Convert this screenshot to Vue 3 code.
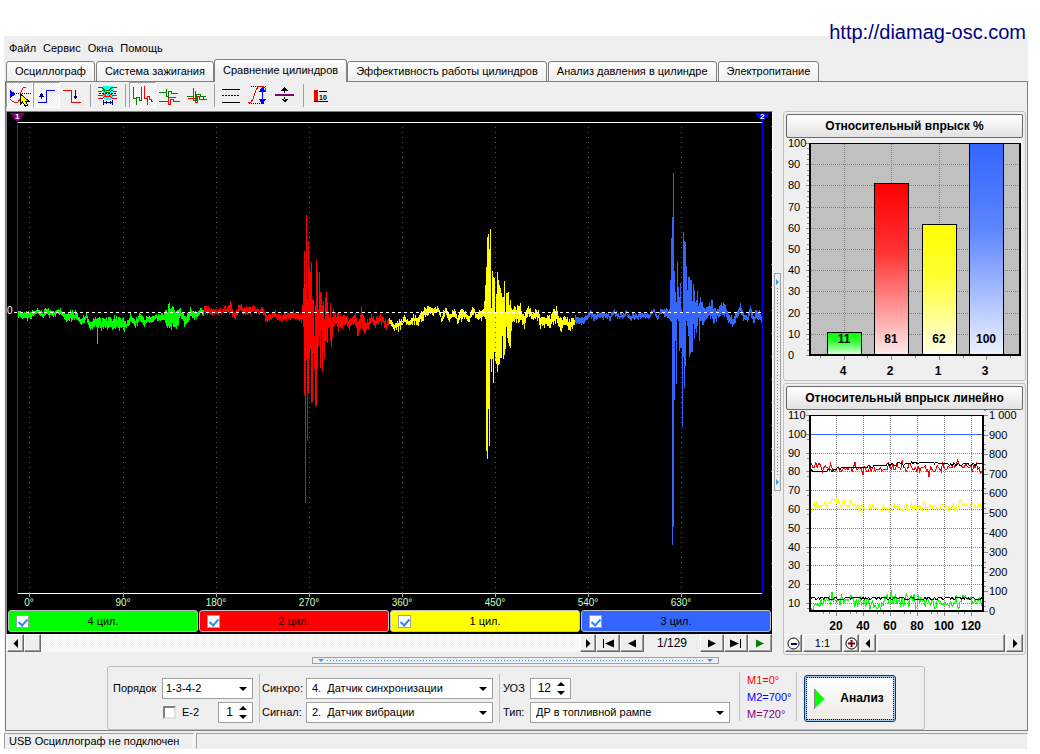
<script setup>
import { ref } from 'vue'

const menu = ['Файл', 'Сервис', 'Окна', 'Помощь']
const tabs = [
  'Осциллограф',
  'Система зажигания',
  'Сравнение цилиндров',
  'Эффективность работы цилиндров',
  'Анализ давления в цилиндре',
  'Электропитание',
]
const activeTab = ref(2)

const cylinders = ref([
  { name: '4 цил.', tone: 'green', on: true },
  { name: '2 цил.', tone: 'red', on: true },
  { name: '1 цил.', tone: 'yellow', on: true },
  { name: '3 цил.', tone: 'blue', on: true },
])

const order = ref('1-3-4-2')
const e2 = ref(false)
const e2Count = ref('1')
const sync = ref('sync')
const signal = ref('vibro')
const advance = ref('12')
const sensor = ref('rail')

/* Deterministic noise source */
function makeRandom(seed) {
  let s = seed
  return () => {
    s = (s * 1664525 + 1013904223) % 4294967296
    return s / 4294967296
  }
}

/* Quiet parts of the trace: [x, centre, half height] */
const quiet = {
  green: [[17, 315, 3], [30, 315, 3], [36, 311, 2], [42, 314, 3], [47, 311, 3], [51, 314, 2], [60, 311, 2], [65, 317, 3], [71, 316, 4], [76, 314, 3], [80, 322, 3], [86, 316, 3], [90, 326, 3], [95, 321, 4], [99, 324, 5], [105, 322, 4], [115, 322, 5], [122, 323, 6], [126, 325, 3], [130, 318, 3], [135, 324, 3], [139, 316, 3], [144, 322, 3], [148, 318, 3], [155, 318, 2], [160, 317, 3], [165, 317, 6], [170, 316, 11], [175, 318, 10], [180, 313, 4], [185, 321, 4], [190, 313, 4], [195, 315, 3], [200, 312, 2], [203, 311, 2]],
  red: [[204, 309, 3], [210, 311, 3], [220, 311, 2], [227, 309, 3], [231, 307, 5], [234, 316, 3], [239, 307, 3], [245, 311, 3], [253, 308, 3], [258, 312, 2], [262, 308, 2], [266, 318, 3], [275, 314, 3], [278, 318, 3], [285, 315, 3], [292, 315, 3], [301, 316, 4], [334, 318, 7], [340, 323, 8], [346, 320, 4], [350, 324, 4], [355, 318, 6], [358, 328, 8], [361, 318, 9], [365, 328, 5], [370, 319, 4], [375, 322, 4], [380, 318, 3], [386, 325, 3], [388, 323, 3]],
  yellow: [[389, 322, 3], [394, 326, 3], [400, 324, 4], [404, 319, 3], [409, 324, 2], [413, 318, 3], [417, 321, 4], [422, 315, 4], [428, 309, 4], [433, 312, 3], [438, 308, 2], [441, 318, 3], [445, 310, 3], [449, 319, 3], [454, 312, 3], [457, 319, 3], [461, 313, 5], [465, 314, 3], [468, 319, 3], [473, 310, 3], [477, 316, 3], [483, 314, 4], [513, 314, 6], [520, 313, 8], [524, 321, 5], [528, 309, 4], [532, 317, 3], [536, 312, 4], [540, 320, 6], [550, 321, 5], [556, 314, 8], [560, 325, 8], [564, 320, 5], [570, 324, 4], [574, 321, 4]],
  blue: [[575, 319, 3], [580, 321, 3], [586, 318, 2], [590, 313, 3], [594, 318, 3], [600, 314, 2], [605, 315, 3], [610, 317, 2], [613, 311, 2], [618, 316, 2], [626, 313, 2], [630, 317, 2], [642, 315, 2], [650, 315, 2], [653, 310, 2], [657, 317, 2], [661, 310, 2], [669, 314, 5], [702, 313, 9], [708, 312, 6], [712, 311, 9], [716, 315, 6], [720, 310, 5], [724, 309, 6], [728, 318, 4], [733, 321, 4], [737, 315, 3], [740, 308, 3], [743, 315, 3], [747, 319, 2], [750, 311, 4], [753, 319, 4], [757, 314, 4], [762, 318, 4]],
}
/* Injector bursts, one [top, bottom] pair per column */
const bursts = {
  red: { from: 302, rows: [[305, 318], [288, 326], [251, 394], [284, 502], [215, 359], [299, 440], [241, 392], [267, 358], [272, 348], [262, 402], [299, 401], [300, 352], [336, 369], [305, 406], [260, 404], [271, 368], [309, 345], [272, 335], [292, 367], [294, 330], [305, 371], [301, 351], [319, 358], [297, 340], [292, 341], [302, 342], [314, 327], [318, 326], [303, 340], [321, 346], [317, 337]] },
  yellow: { from: 484, rows: [[301, 316], [285, 318], [267, 450], [237, 458], [234, 408], [249, 445], [229, 358], [308, 371], [271, 358], [277, 382], [278, 351], [312, 360], [294, 363], [272, 371], [280, 364], [285, 363], [288, 357], [293, 357], [297, 335], [297, 358], [281, 354], [312, 348], [293, 326], [293, 337], [292, 342], [305, 345], [300, 347], [308, 330]] },
  blue: { from: 670, rows: [[280, 320], [238, 321], [217, 544], [173, 526], [271, 399], [292, 340], [302, 383], [261, 318], [287, 320], [297, 350], [283, 347], [309, 347], [313, 426], [232, 356], [241, 387], [242, 365], [266, 320], [290, 325], [277, 335], [277, 356], [280, 353], [280, 351], [301, 351], [284, 323], [290, 338], [302, 328], [300, 332], [291, 325], [306, 317], [303, 340], [297, 320], [302, 320]] },
}

function tracePath(name, seed) {
  const rnd = makeRandom(seed)
  const keys = quiet[name]
  const burst = bursts[name]
  let d = ''
  let k = 0
  for (let x = keys[0][0]; x <= keys[keys.length - 1][0]; x++) {
    while (k < keys.length - 2 && x > keys[k + 1][0]) k++
    const a = keys[k]
    const b = keys[k + 1]
    const t = Math.min(1, (x - a[0]) / (b[0] - a[0]))
    const mid = a[1] + (b[1] - a[1]) * t + (rnd() - 0.5) * 3
    const half = a[2] + (b[2] - a[2]) * t
    let top = Math.round(mid - half * (0.4 + rnd() * 0.9))
    let bottom = Math.round(mid + half * (0.4 + rnd() * 0.9))
    if (burst && x >= burst.from && x < burst.from + burst.rows.length) {
      ;[top, bottom] = burst.rows[x - burst.from]
    }
    if (name === 'green' && x === 97) bottom = 343
    d += `M${x} ${top}h1V${bottom + 1}h-1z`
  }
  return d
}
const traces = [
  { tone: 'green', d: tracePath('green', 11) },
  { tone: 'red', d: tracePath('red', 23) },
  { tone: 'yellow', d: tracePath('yellow', 37) },
  { tone: 'blue', d: tracePath('blue', 51) },
]

const scope = { x: 7, y: 112, w: 765, h: 497 }
const grid = [0, 90, 180, 270, 360, 450, 540, 630].map((deg, i) => ({
  label: deg + '°',
  x: [29, 123, 216, 309, 402, 495, 588, 681][i],
}))
const left = (x) => ({ left: ((x - scope.x) / scope.w) * 100 + '%' })
const edgeTicks = Array.from({ length: 21 }, (_, i) => 126 + i * 23)

/* Bar chart */
const barY = (v) => Math.round(355 - v * 2.12)
const bars = [
  { name: '4', value: 11, x: 827, tone: 'green' },
  { name: '2', value: 81, x: 874, tone: 'red' },
  { name: '1', value: 62, x: 922, tone: 'yellow' },
  { name: '3', value: 100, x: 969, tone: 'blue' },
]
const barScale = Array.from({ length: 11 }, (_, i) => i * 10)
const barMinor = Array.from({ length: 41 }, (_, i) => Math.round(355 - i * 5.3))

/* Line chart */
const lineY = (v) => 415 + (110 - v) * 1.88
const lineX = (n) => 809 + n * 1.35
const lineScale = Array.from({ length: 11 }, (_, i) => 110 - i * 10)
const rightScale = Array.from({ length: 11 }, (_, i) => ({
  label: i === 10 ? '1 000' : String(i * 100),
  y: Math.round(611 - i * 19.6),
}))
const lineTicks = [20, 40, 60, 80, 100, 120]

function series(seed, keys, amp, low) {
  const rnd = makeRandom(seed)
  const pts = []
  let k = 0
  for (let n = 1; n <= 129; n++) {
    while (k < keys.length - 2 && n > keys[k + 1][0]) k++
    const [x0, v0] = keys[k]
    const [x1, v1] = keys[k + 1]
    const base = v0 + ((v1 - v0) * (n - x0)) / (x1 - x0)
    const wide = rnd() > 0.85 ? 1.8 : 1
    const v = Math.max(low, Math.round(base + (rnd() - 0.5) * 2 * amp * wide))
    pts.push(`${lineX(n).toFixed(1)},${lineY(v).toFixed(1)}`)
  }
  return pts.join(' ')
}
const lines = [
  { tone: 'red', pts: series(5, [[1, 83], [8, 83], [20, 82], [40, 81], [60, 82], [65, 83], [90, 81], [110, 83], [129, 81]], 2.1, 70) },
  { tone: 'yellow', pts: series(9, [[1, 62], [8, 61], [20, 64], [28, 62], [50, 61], [100, 61], [129, 62]], 2, 50) },
  { tone: 'green', pts: series(14, [[1, 8], [12, 13], [20, 10], [28, 13], [45, 9], [60, 12], [100, 10], [129, 10]], 3.6, 6.4) },
  { tone: 'black', pts: series(3, [[1, 80], [12, 80], [25, 82], [40, 82], [60, 83.4], [85, 85], [110, 83.5], [129, 84]], 0.5, 70) },
  { tone: 'black', pts: series(8, [[1, 12.6], [129, 12.4]], 0.3, 12) },
]
</script>

<template>
  <div class="page">
    <a class="site" href="http://diamag-osc.com">http://diamag-osc.com</a>

    <div class="window">
      <nav class="menu">
        <button v-for="m in menu" :key="m" type="button">{{ m }}</button>
      </nav>

      <div class="tabs" role="tablist">
        <button
          v-for="(t, i) in tabs"
          :key="t"
          type="button"
          role="tab"
          class="tab"
          :class="{ active: i === activeTab }"
          :aria-selected="i === activeTab"
          @click="activeTab = i"
        >{{ t }}</button>
      </div>

      <main class="frame">
        <div class="toolbar">
          <button type="button" class="tool pressed" aria-label="Уровень">
            <svg viewBox="0 0 27 28">
              <path d="M4 8v8l6-4z" fill="#00f" />
              <path d="M10 11.500H25" stroke="#000" stroke-dasharray="1 1" fill="none" />
              <path d="M4 17l2 2 2 1h4l2-3 1-7 2-4 3-1" stroke="#f00" fill="none" />
              <path d="M14.500 12v10l2-2 3 4 2-1-2-4h3z" fill="#ff0" stroke="#000" />
            </svg>
          </button>
          <button type="button" class="tool pressed" aria-label="Фронт">
            <svg viewBox="0 0 27 28" fill="none">
              <path d="M5 20.500H13.500V8.500H22" stroke="#00f" />
              <path d="M8.500 17V11" stroke="#000080" />
              <path d="M6 14.500l2.500-4 2.500 4z" fill="#000080" />
            </svg>
          </button>
          <button type="button" class="tool" aria-label="Спад">
            <svg viewBox="0 0 27 28" fill="none">
              <path d="M3 8.500H11.500V20.500H21" stroke="#f00" />
              <path d="M15.500 8V15" stroke="#000080" />
              <path d="M13 13.500l2.500 4 2.500-4z" fill="#000080" />
            </svg>
          </button>
          <span class="sep"></span>
          <button type="button" class="tool" aria-label="Окно">
            <svg viewBox="0 0 27 28" fill="none">
              <path d="M9 4h10v11l-2 3h-6l-2-3z" fill="#0ff" />
              <path d="M4 5.500h4l3 3h4l3-3h5M4 9.500h3l2-1 3 2h3l3-2 2 1h3" stroke="#008000" />
              <path d="M5 11.500H23" stroke="#000" stroke-dasharray="2 1" />
              <path d="M4 13.500h4l2-1 3 2h1l3-2 2 1h4M4 16.500h4l3-2h5l3 2h4" stroke="#f00" />
              <path d="M9.500 18v5M18.500 18v5M10 20.500h8M12 19v3M16 19v3" stroke="#000080" />
            </svg>
          </button>
          <span class="sep"></span>
          <button type="button" class="tool pressed" aria-label="Последовательно">
            <svg viewBox="0 0 27 28" fill="none">
              <path d="M4.500 5V16.500H7.500V22.500V15.500H10.500V18.500H12.500V4.500V16.500" stroke="#008000" />
              <path d="M15.500 4V16.500H18.500V22.500V14.500H20.500V17.500H22.500V19.500H24" stroke="#f00" />
            </svg>
          </button>
          <button type="button" class="tool" aria-label="Раздельно">
            <svg viewBox="0 0 27 28" fill="none">
              <path d="M3 10.500H10.500V6.500V14.500H12.500V9.500H15.500V11.500H22" stroke="#008000" />
              <path d="M3 19.500H12.500V14.500V22.500H14.500V17.500H17.500V19.500H24M12 15.500h8" stroke="#f00" />
            </svg>
          </button>
          <button type="button" class="tool" aria-label="Наложение">
            <svg viewBox="0 0 27 28" fill="none">
              <path d="M4 14.500H10.500V5.500V18.500H13.500V12.500H17.500V14.500H23" stroke="#008000" />
              <path d="M5 16.500H12.500V8.500V20.500H14.500V14.500H16.500V17.500H24M20.500 14v4" stroke="#f00" />
            </svg>
          </button>
          <span class="sep"></span>
          <button type="button" class="tool" aria-label="Линии">
            <svg viewBox="0 0 27 28" fill="none" stroke="#000">
              <path d="M4 7.500H22M4 20.500H22" />
              <path d="M4 13.500H22" stroke-dasharray="2 1" />
            </svg>
          </button>
          <button type="button" class="tool" aria-label="Амплитуда">
            <svg viewBox="0 0 27 28" fill="none">
              <path d="M6 4.500H22M4 21.500H20" stroke="#000" stroke-dasharray="1 1" />
              <path d="M3 21l3-1 2-3 3-9 2-3 4-1 3 2 1 3" stroke="#f00" />
              <path d="M17.500 7V20" stroke="#00f" />
              <path d="M13.500 10l4-5 4 5zM13.500 17l4 5 4-5z" fill="#00f" />
            </svg>
          </button>
          <button type="button" class="tool" aria-label="Центр">
            <svg viewBox="0 0 27 28">
              <path d="M9 8.500l3.500-3.500 3.500 3.500zM12 8h1v3h-1zM9 17l3.500 3.500 3.500-3.500zM12 15h1v3h-1z" />
              <path d="M3 12h19v2H3z" fill="#800080" />
            </svg>
          </button>
          <span class="sep"></span>
          <button type="button" class="tool" aria-label="Десять циклов">
            <svg viewBox="0 0 27 28">
              <path d="M7 8h4v12H7z" fill="#f00" />
              <path d="M12 9.500h8M7 19.500h14" stroke="#000" />
              <text x="12" y="18" class="tiny">10</text>
            </svg>
          </button>
        </div>

        <div class="body">
          <section class="left">
            <div class="scope">
              <div class="plot">
                <svg :viewBox="`${scope.x} ${scope.y} ${scope.w} ${scope.h}`" preserveAspectRatio="none" shape-rendering="crispEdges" fill="none">
                  <path d="M17 122.500H763M17 593.500H763" stroke="#fff" />
                  <path v-for="g in grid" :key="'t' + g.x" :d="`M${g.x + 0.5} 593V597`" stroke="#aaa" />
                  <path v-for="t in traces" :key="t.tone" :d="t.d" :class="'fill-' + t.tone" />
                  <path v-for="g in grid" :key="'o' + g.x" :d="`M${g.x + 0.5} 127V593`" stroke="#555" stroke-dasharray="1 4" />
                  <path d="M14 312.500H763" stroke="#fff" stroke-dasharray="3 3" />
                  <path d="M17 122h1V594h-1z" fill="#800080" />
                  <path d="M762 122h1V594h-1z" fill="#00f" />
                  <path v-for="y in edgeTicks" :key="'e' + y" :d="`M771 ${y + 0.5}h1`" stroke="#777" />
                  <path d="M10 113h15l-7 9h-1z" fill="#800080" />
                  <path d="M755 113h15l-7 9h-1z" fill="#00f" />
                </svg>
                <span class="mark" :style="left(17)">1</span>
                <span class="mark" :style="left(762)">2</span>
                <span class="zero">0</span>
                <span v-for="g in grid" :key="g.label" class="deg" :style="left(g.x)">{{ g.label }}</span>
              </div>
              <div class="cylinders">
                <label v-for="c in cylinders" :key="c.name" :class="['cyl', 'bg-' + c.tone]">
                  <input v-model="c.on" type="checkbox" class="tick" />
                  <span>{{ c.name }}</span>
                </label>
              </div>
            </div>

            <div class="navrow">
              <button type="button" class="raised w17" aria-label="Влево"><svg viewBox="0 0 8 9"><path d="M6 0v9L1.500 4.500z" /></svg></button>
              <button type="button" class="raised w17" aria-label="Ползунок"></button>
              <div class="track"></div>
              <button type="button" class="raised w16" aria-label="Вправо"><svg viewBox="0 0 8 9"><path d="M2 0v9l4.500-4.500z" /></svg></button>
              <button type="button" class="raised w24" aria-label="Первый"><svg viewBox="0 0 12 9"><path d="M1 0h1v9H1zM12 .5v8L3 4.500z" /></svg></button>
              <button type="button" class="raised w24" aria-label="Предыдущий"><svg viewBox="0 0 10 9"><path d="M9 .5v8L1 4.500z" /></svg></button>
              <span class="counter">1/129</span>
              <button type="button" class="raised w24" aria-label="Следующий"><svg viewBox="0 0 10 9"><path d="M1 .5v8l8-4z" /></svg></button>
              <button type="button" class="raised w24" aria-label="Последний"><svg viewBox="0 0 12 9"><path d="M10 0h1v9h-1zM0 .5v8l9-4z" /></svg></button>
              <button type="button" class="raised w24 play" aria-label="Пуск"><svg viewBox="0 0 10 9"><path d="M1 .5v8l8-4z" /></svg></button>
            </div>
          </section>

          <div class="vsplit">
            <div class="vbar">
              <svg viewBox="0 0 5 6"><path d="M1 0v6l3-3z" /></svg>
              <i></i>
              <svg viewBox="0 0 5 6"><path d="M1 0v6l3-3z" /></svg>
            </div>
          </div>

          <aside class="side">
            <section class="panel">
              <button type="button" class="head">Относительный впрыск %</button>
              <svg class="chart" viewBox="784 138 241 242" shape-rendering="crispEdges">
                <defs>
                  <linearGradient v-for="b in bars" :id="'g-' + b.tone" :key="b.tone" x1="0" y1="0" x2="0" y2="1">
                    <stop offset="0" :class="'stop-' + b.tone" />
                    <stop offset="0.4" :class="'stop-' + b.tone" stop-opacity="0.8" />
                    <stop offset="1" :class="'stop-' + b.tone" stop-opacity="0.08" />
                  </linearGradient>
                </defs>
                <path d="M811 144h208v210H811z" fill="#c0c0c0" />
                <path v-for="v in barScale.slice(1, 10)" :key="v" :d="`M811 ${barY(v) + 0.5}H1019`" class="dots" />
                <path v-for="b in bars" :key="b.name" :d="`M${b.x + 17.5} 144V354`" class="dots" />
                <path v-for="y in barMinor" :key="'m' + y" :d="`M807 ${y + 0.5}h3`" stroke="#888" />
                <path v-for="v in barScale" :key="'k' + v" :d="`M806 ${barY(v) + 0.5}h4`" stroke="#888" />
                <path d="M820.500 356v2M844.500 356v4M867.500 356v2M891.500 356v4M915.500 356v2M939.500 356v4M963.500 356v2M986.500 356v4M1010.500 356v2" stroke="#888" />
                <g v-for="b in bars" :key="'b' + b.name">
                  <rect :x="b.x" :y="barY(b.value)" width="35" :height="355 - barY(b.value)" fill="#fff" />
                  <rect :x="b.x + 0.5" :y="barY(b.value) + 0.5" width="34" :height="355 - barY(b.value)" :fill="`url(#g-${b.tone})`" stroke="#000" />
                  <text :x="b.x + 17" y="343" class="bold mid">{{ b.value }}</text>
                  <text :x="b.x + 16" y="375" class="bold mid">{{ b.name }}</text>
                </g>
                <path d="M809 143h212v213H809zM811 144v210h208V144z" fill-rule="evenodd" />
                <text v-for="v in barScale" :key="'l' + v" x="788" :y="barY(v) + 4" class="axis">{{ v }}</text>
              </svg>
            </section>

            <section class="panel">
              <button type="button" class="head">Относительный впрыск линейно</button>
              <svg class="chart" viewBox="784 410 241 224" shape-rendering="crispEdges">
                <path d="M811 415h172v196H811z" fill="#fff" />
                <path v-for="v in lineScale.slice(1)" :key="v" :d="`M811 ${Math.round(lineY(v)) + 0.5}H983`" class="dots" />
                <path v-for="n in lineTicks" :key="'x' + n" :d="`M${Math.round(lineX(n)) + 0.5} 416V611`" class="dots" />
                <path v-for="v in lineScale" :key="'k' + v" :d="`M806 ${Math.round(lineY(v)) + 0.5}h4M807 ${Math.round(lineY(v)) + 5.5}h3`" stroke="#888" />
                <path v-for="r in rightScale" :key="'r' + r.y" :d="`M984 ${r.y + 0.5}h4M984 ${r.y - 4.5}h2M984 ${r.y - 9.5}h2`" stroke="#888" />
                <path v-for="n in lineTicks" :key="'b' + n" :d="`M${Math.round(lineX(n)) + 0.5} 612v4M${Math.round(lineX(n)) - 12.5} 612v2M${Math.round(lineX(n)) - 6.5} 612v2`" stroke="#888" />
                <path d="M811 434.500H983" stroke="#36f" />
                <polyline v-for="(l, i) in lines" :key="i" :points="l.pts" fill="none" :class="'line-' + l.tone" />
                <path d="M809 415h175v197H809zM811 416v194h171V416z" fill-rule="evenodd" />
                <text v-for="v in lineScale" :key="'l' + v" x="788" :y="Math.round(lineY(v)) + 4" class="axis">{{ v }}</text>
                <text v-for="r in rightScale" :key="r.label" x="989" :y="r.y + 4" class="axis">{{ r.label }}</text>
                <text v-for="n in lineTicks" :key="'n' + n" :x="lineX(n)" y="630" class="bold mid">{{ n }}</text>
              </svg>
              <div class="zoomrow">
                <button type="button" class="raised w17 disc" aria-label="Уменьшить"><svg viewBox="0 0 13 13"><circle cx="6.500" cy="6.500" r="5.500" fill="#fff" stroke="#000" /><path d="M4 6h6v2H4z" fill="#000080" /></svg></button>
                <button type="button" class="raised ratio">1:1</button>
                <button type="button" class="raised w16 disc" aria-label="Увеличить"><svg viewBox="0 0 13 13"><circle cx="6.500" cy="6.500" r="5.500" fill="#fff" stroke="#000" /><path d="M3 5.500h7v2H3zM5.500 3h2v7h-2z" fill="#800000" /></svg></button>
                <button type="button" class="raised w16" aria-label="Назад"><svg viewBox="0 0 8 9"><path d="M6 0v9L1.500 4.500z" /></svg></button>
                <button type="button" class="raised grow" aria-label="Ползунок"></button>
                <button type="button" class="raised w17" aria-label="Вперёд"><svg viewBox="0 0 8 9"><path d="M2 0v9l4.500-4.500z" /></svg></button>
              </div>
            </section>
          </aside>
        </div>

        <div class="hsplit">
          <div class="hbar">
            <svg viewBox="0 0 6 5"><path d="M0 1h6l-3 3z" /></svg>
            <i></i>
            <svg viewBox="0 0 6 5"><path d="M0 1h6l-3 3z" /></svg>
          </div>
        </div>

        <form class="settings" @submit.prevent>
          <div class="group first">
            <label for="order">Порядок</label>
            <span class="select"><select id="order" v-model="order"><option>1-3-4-2</option></select></span>
            <span></span>
            <span class="pair">
              <input id="e2" v-model="e2" type="checkbox" class="sunk" />
              <label for="e2">E-2</label>
              <span class="spin small">
                <input v-model="e2Count" type="text" aria-label="Число" />
                <span><button type="button" class="up" aria-label="Больше"></button><button type="button" class="down" aria-label="Меньше"></button></span>
              </span>
            </span>
          </div>
          <div class="group second">
            <label for="sync">Синхро:</label>
            <span class="select"><select id="sync" v-model="sync"><option value="sync">4.&nbsp; Датчик синхронизации</option></select></span>
            <label for="signal">Сигнал:</label>
            <span class="select"><select id="signal" v-model="signal"><option value="vibro">2.&nbsp; Датчик вибрации</option></select></span>
          </div>
          <div class="group third">
            <label for="advance">УОЗ</label>
            <span class="spin">
              <input id="advance" v-model="advance" type="text" />
              <span><button type="button" class="up" aria-label="Больше"></button><button type="button" class="down" aria-label="Меньше"></button></span>
            </span>
            <label for="sensor">Тип:</label>
            <span class="select"><select id="sensor" v-model="sensor"><option value="rail">ДР в топливной рампе</option></select></span>
          </div>
          <div class="marks">
            <span class="m1">M1=0°</span>
            <span class="m2">M2=700°</span>
            <span class="m3">M=720°</span>
          </div>
          <div class="go">
            <button type="submit" class="analyse">
              <svg viewBox="0 0 11 20"><path d="M.5 0v20" stroke="#888" /><path d="M1 0l9.500 10L1 19z" fill="#0f0" /></svg>
              <span>Анализ</span>
            </button>
          </div>
        </form>
      </main>

      <footer class="status">
        <span>USB Осциллограф не подключен</span>
        <span></span>
      </footer>
    </div>
  </div>
</template>

<style>
body {
  background: #fff;
}
</style>

<style scoped>
.page {
  position: relative;
  box-sizing: border-box;
  height: 100vh;
  min-height: 750px;
  padding: 36px 12px 5px 4px;
  font: 11px/13px "Liberation Sans", Arial, sans-serif;
  color: #000;
}
.page * {
  box-sizing: border-box;
}
button,
input,
select {
  font: inherit;
  color: inherit;
  margin: 0;
  padding: 0;
  border: 0;
  border-radius: 0;
  background: none;
}
svg {
  display: block;
}
.site {
  position: absolute;
  top: 20px;
  right: 14px;
  font-size: 20px;
  line-height: 24px;
  color: #000080;
  text-decoration: none;
}
.window {
  display: flex;
  flex-direction: column;
  height: 100%;
  background: #efefef;
}
.menu {
  display: flex;
  gap: 7px;
  height: 23px;
  padding: 2px 0 0 5px;
}
.tabs {
  display: flex;
  align-items: flex-end;
  gap: 1px;
  height: 23px;
  margin: 0 0 -1px 2px;
  position: relative;
}
.tab {
  height: 21px;
  padding: 0 8px;
  border: 1px solid #808080;
  border-radius: 3px 3px 0 0;
  background: linear-gradient(#fdfdfd, #efefef);
  white-space: nowrap;
}
.tab.active {
  height: 23px;
  padding-bottom: 2px;
  margin: 0 -1px;
  border-bottom: 0;
  background: linear-gradient(#fdfdfd, #efefef 60%);
}
.frame {
  display: flex;
  flex: 1;
  flex-direction: column;
  min-height: 0;
  margin-left: 1px;
  border: 1px solid #808080;
}
.toolbar {
  display: flex;
  align-items: flex-start;
  height: 29px;
}
.tool {
  width: 27px;
  height: 26px;
  border: 1px solid transparent;
}
.tool svg {
  width: 27px;
  height: 28px;
  margin: -1px;
  shape-rendering: crispEdges;
}
.tool.pressed {
  border-color: #a0a0a0 #fff #fff #a0a0a0;
  background: conic-gradient(#fff 25%, #ececec 0 50%, #fff 0 75%, #ececec 0) 0 0 / 2px 2px;
}
.sep {
  width: 1px;
  height: 23px;
  margin: 2px 4px 0 3px;
  background: #a0a0a0;
}
.sep + .tool {
  margin-left: -1px;
}
.tool + .sep {
  margin-left: 4px;
}
.tool:nth-child(3) + .sep {
  margin-left: 3px;
}
.tiny {
  font: bold 7px "Liberation Sans", Arial, sans-serif;
}
.body {
  display: grid;
  grid-template-columns: minmax(0, 1fr) 10px 243px;
  flex: 1;
  min-height: 0;
  padding-right: 1px;
}
.left {
  display: flex;
  flex-direction: column;
  min-height: 0;
}
.scope {
  display: flex;
  flex: 1;
  flex-direction: column;
  min-height: 0;
  border: 1px solid #808080;
  border-right-color: #fff;
  border-bottom: 0;
  background: #000;
}
.plot {
  position: relative;
  flex: 1;
  min-height: 0;
}
.plot svg {
  width: 100%;
  height: 100%;
}
.mark,
.zero,
.deg {
  position: absolute;
  font-size: 10px;
  line-height: 10px;
}
.mark {
  top: 0;
  margin-left: -2px;
  font-size: 8px;
  font-weight: bold;
  color: #fff;
}
.zero {
  top: 39%;
  left: 0;
  color: #fff;
}
.deg {
  bottom: 1px;
  transform: translateX(-50%);
  color: #cfc;
}
.fill-green { fill: #0f0; }
.fill-red { fill: #f00; }
.fill-yellow { fill: #ff0; }
.fill-blue { fill: #36f; }
.bg-green { background: #0f0; }
.bg-red { background: #f00; }
.bg-yellow { background: #ff0; }
.bg-blue { background: #36f; }
.cylinders {
  display: flex;
  gap: 1px;
  height: 25px;
  padding: 1px 1px 2px;
}
.cyl {
  position: relative;
  display: flex;
  flex: 1;
  align-items: center;
  justify-content: center;
  border: 1px solid #c0c0c0;
  border-radius: 3px;
}
.tick {
  position: absolute;
  left: 7px;
  top: 4px;
  width: 13px;
  height: 13px;
  appearance: none;
  border: 1px solid #a0a0a0;
  background: #fff;
}
.tick:checked::after {
  content: "";
  position: absolute;
  left: 3px;
  top: 1px;
  width: 4px;
  height: 7px;
  border: solid #2a8cf0;
  border-width: 0 2px 2px 0;
  transform: rotate(42deg);
}
.navrow {
  display: flex;
  height: 21px;
  padding: 0 1px 3px;
}
.raised {
  display: flex;
  flex: none;
  align-items: center;
  justify-content: center;
  border: 1px solid;
  border-color: #fff #696969 #696969 #fff;
  box-shadow: inset -1px -1px #a0a0a0;
  background: #efefef;
}
.raised svg {
  width: auto;
  height: 9px;
}
.disc svg {
  width: 13px;
  height: 13px;
}
.w16 { width: 16px; }
.w17 { width: 17px; }
.w24 { width: 24px; }
.play { fill: #008000; }
.track {
  flex: 1;
  background: conic-gradient(#fff 25%, #f0f0f0 0 50%, #fff 0 75%, #f0f0f0 0) 0 0 / 2px 2px;
}
.counter {
  width: 56px;
  font-size: 12px;
  line-height: 19px;
  text-align: center;
}
.vsplit {
  display: flex;
  align-items: center;
  justify-content: center;
  padding: 0 2px 2px 0;
}
.vbar,
.hbar {
  display: flex;
  align-items: center;
  border: 1px solid #a0a0a0;
  fill: #39f;
}
.vbar {
  flex-direction: column;
  width: 7px;
  height: 218px;
  padding: 5px 0;
}
.vbar svg { width: 5px; height: 6px; }
.vbar i {
  flex: 1;
  width: 1px;
  margin: 3px 0;
  background: repeating-linear-gradient(#39f 0 1px, transparent 1px 3px);
}
.side {
  display: flex;
  flex-direction: column;
  gap: 2px;
}
.panel {
  display: flex;
  flex-direction: column;
  padding-top: 2px;
  border: 1px solid #c0c0c0;
  border-radius: 3px;
}
.head {
  height: 24px;
  margin: 0 2px;
  border: 1px solid #696969;
  border-radius: 2px;
  background: linear-gradient(#fff, #e2e2e2);
  font-size: 12px;
  font-weight: bold;
}
.chart {
  width: 100%;
}
.dots {
  stroke: #808080;
  stroke-dasharray: 1 1;
}
.axis {
  font: 11px "Liberation Sans", Arial, sans-serif;
}
.bold {
  font: bold 12px "Liberation Sans", Arial, sans-serif;
}
.mid {
  text-anchor: middle;
}
.stop-green { stop-color: #0f0; }
.stop-red { stop-color: #f00; }
.stop-yellow { stop-color: #ff0; }
.stop-blue { stop-color: #36f; }
.line-green { stroke: #0f0; }
.line-red { stroke: #f00; }
.line-yellow { stroke: #ff0; }
.line-black { stroke: #000; }
.zoomrow {
  display: flex;
  gap: 1px;
  height: 20px;
  padding: 0 2px 2px 1px;
}
.ratio {
  width: 39px;
}
.grow {
  flex: 1;
}
.hsplit {
  display: flex;
  align-items: center;
  height: 11px;
  padding: 0 308px 0 306px;
}
.hbar {
  flex: 1;
  height: 7px;
  padding: 0 5px;
}
.hbar svg { width: 6px; height: 5px; }
.hbar i {
  flex: 1;
  height: 1px;
  margin: 0 3px;
  background: repeating-linear-gradient(90deg, #39f 0 1px, transparent 1px 3px);
}
.settings {
  display: flex;
  align-self: flex-start;
  height: 64px;
  margin-left: 101px;
  border: 1px solid #c0c0c0;
  border-radius: 3px;
}
.group {
  display: grid;
  grid-template-rows: 21px 21px;
  row-gap: 3px;
  align-items: center;
  align-content: start;
  padding-top: 11px;
}
.group label {
  white-space: nowrap;
}
.first {
  grid-template-columns: 49px 91px;
  padding-left: 5px;
}
.second {
  grid-template-columns: 44px 187px;
  padding-left: 9px;
}
.third {
  grid-template-columns: 27px 200px;
  padding-left: 10px;
}
.second,
.third,
.marks,
.go {
  position: relative;
}
.second::before,
.third::before,
.marks::before,
.go::before {
  content: "";
  position: absolute;
  left: 6px;
  top: 7px;
  width: 1px;
  height: 49px;
  background: #c0c0c0;
}
.marks::before,
.go::before {
  left: 9px;
  top: 5px;
}
.select {
  position: relative;
  display: block;
  height: 21px;
}
.select select {
  width: 100%;
  height: 21px;
  padding: 0 20px 1px 3px;
  appearance: none;
  border: 1px solid #a0a0a0;
  background: #fff;
}
.second select,
.third select {
  padding-left: 5px;
}
.select::after,
.up,
.down {
  border: 4px solid transparent;
}
.select::after {
  content: "";
  position: absolute;
  right: 6px;
  top: 9px;
  border-top-color: #000;
  border-bottom: 0;
}
.pair {
  display: flex;
  align-items: center;
  justify-content: space-between;
}
.sunk {
  width: 13px;
  height: 13px;
  margin-left: 1px;
  appearance: none;
  border: 2px solid;
  border-color: #808080 #e0e0e0 #e0e0e0 #808080;
  background: #fff;
}
.sunk:checked {
  background: #2a8cf0;
}
.pair label {
  flex: 1;
  padding-left: 6px;
}
.spin {
  display: flex;
  align-items: center;
  width: 41px;
  height: 21px;
  padding-right: 5px;
  border: 1px solid #a0a0a0;
  background: #fff;
}
.spin.small {
  width: 35px;
}
.spin input {
  flex: 1;
  width: 10px;
  padding-right: 6px;
  font-size: 12px;
  text-align: right;
  outline: 0;
}
.spin > span {
  display: flex;
  flex-direction: column;
  gap: 5px;
}
.up {
  border-top: 0;
  border-bottom-color: #000;
}
.down {
  border-bottom: 0;
  border-top-color: #000;
}
.marks {
  display: flex;
  flex-direction: column;
  width: 57px;
  padding: 5px 0 0 17px;
  line-height: 17px;
}
.m1 { color: #f00; }
.m2 { color: #00f; }
.m3 { color: #800080; }
.go {
  padding: 8px 28px 0 17px;
}
.analyse {
  display: flex;
  align-items: center;
  width: 92px;
  height: 47px;
  padding: 0 2px 0 9px;
  border: 1px solid #003c74;
  border-radius: 3px;
  outline: 1px dotted #000;
  outline-offset: -3px;
  background: linear-gradient(#fff, #ecebe5);
  box-shadow: inset 0 0 0 2px #a5c7f0;
  font-size: 12px;
  font-weight: bold;
}
.analyse svg {
  width: 11px;
  height: 20px;
}
.analyse span {
  flex: 1;
  padding-left: 6px;
  text-align: center;
}
.status {
  display: flex;
  gap: 2px;
  height: 18px;
  padding-top: 2px;
}
.status span {
  padding: 1px 4px 0;
  border: 1px solid;
  border-color: #a0a0a0 #fff transparent #a0a0a0;
  white-space: nowrap;
}
.status span:first-child {
  width: 190px;
}
.status span:last-child {
  flex: 1;
}
</style>
